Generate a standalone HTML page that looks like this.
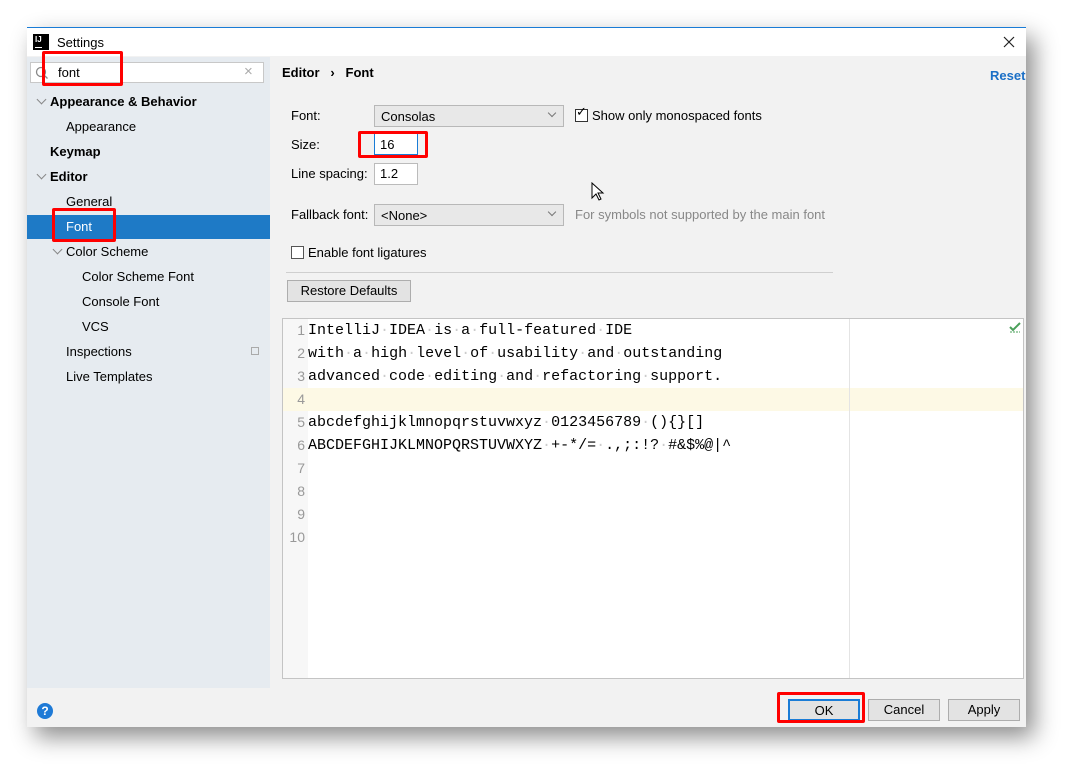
<!DOCTYPE html>
<html><head><meta charset="utf-8"><style>
*{box-sizing:border-box;margin:0;padding:0}
body{width:1080px;height:781px;background:#fff;position:relative;overflow:hidden;font-family:"Liberation Sans",sans-serif;font-size:13px;color:#000}
.a{position:absolute}
.win{left:27px;top:27px;width:999px;height:700px;background:#f2f2f2;border-top:1px solid #1a7cd6;box-shadow:8px 10px 22px rgba(0,0,0,.45)}
.side{left:27px;top:57px;width:243px;height:631px;background:#e6ebf0}
.t{position:absolute;white-space:nowrap}
.b{font-weight:bold}
.chev{position:absolute;width:7px;height:7px;border-right:1.5px solid #888;border-bottom:1.5px solid #888;transform:rotate(45deg)}
.combo{position:absolute;background:#e8e8e8;border:1px solid #b8b8b8;height:22px}
.combo span{position:absolute;left:6px;top:3px}
.combo i{position:absolute;right:8px;top:4px;width:6px;height:6px;border-right:1px solid #777;border-bottom:1px solid #777;transform:rotate(45deg)}
.field{position:absolute;background:#fff;border:1px solid #bbb;height:22px}
.cb{position:absolute;width:13px;height:13px;border:1px solid #333;background:#fff}
.btn{position:absolute;background:#e3e3e3;border:1px solid #adadad;height:22px;text-align:center;line-height:20px}
.red{position:absolute;border:3px solid #f00;border-radius:2px}
.code{font-family:"Liberation Mono",monospace;font-size:15px;line-height:23px}
.code s{text-decoration:none;color:#ccc}
.ln{position:absolute;left:0;width:22px;text-align:right;color:#999;font-family:"Liberation Sans",sans-serif;font-size:14px}
</style></head><body>
<div class="a win"></div>
<div class="a" style="left:27px;top:28px;width:999px;height:28px;background:#fff"></div>
<div class="a" style="left:33px;top:34px;width:16px;height:16px;background:#000;color:#fff;font-size:8px;font-weight:bold;padding:1px 0 0 2px">IJ<div style="position:absolute;left:2px;bottom:2px;width:7px;height:1.5px;background:#fff"></div></div>
<div class="t" style="left:57px;top:35px">Settings</div>
<svg class="a" style="left:1003px;top:36px" width="12" height="12"><path d="M1 1l10 10M11 1L1 11" stroke="#222" stroke-width="1.2"/></svg>
<div class="a side"></div>
<div class="a" style="left:30px;top:62px;width:234px;height:21px;background:#fff;border:1px solid #c8c8c8"></div>
<svg class="a" style="left:35px;top:66px" width="14" height="14"><circle cx="6" cy="6" r="4.5" fill="none" stroke="#888" stroke-width="1.3"/><path d="M9.5 9.5l3 3" stroke="#888" stroke-width="1.3"/></svg>
<div class="t" style="left:58px;top:65px">font</div>
<div class="t" style="left:244px;top:63px;color:#aaa;font-size:15px">×</div>
<div class="chev" style="left:38px;top:96px"></div>
<div class="t b" style="left:50px;top:94px">Appearance &amp; Behavior</div>
<div class="t" style="left:66px;top:119px">Appearance</div>
<div class="t b" style="left:50px;top:144px">Keymap</div>
<div class="chev" style="left:38px;top:171px"></div>
<div class="t b" style="left:50px;top:169px">Editor</div>
<div class="t" style="left:66px;top:194px">General</div>
<div class="a" style="left:27px;top:215px;width:243px;height:24px;background:#1e7ac6"></div>
<div class="t" style="left:66px;top:219px;color:#fff">Font</div>
<div class="chev" style="left:54px;top:246px"></div>
<div class="t" style="left:66px;top:244px">Color Scheme</div>
<div class="t" style="left:82px;top:269px">Color Scheme Font</div>
<div class="t" style="left:82px;top:294px">Console Font</div>
<div class="t" style="left:82px;top:319px">VCS</div>
<div class="t" style="left:66px;top:344px">Inspections</div>
<div class="a" style="left:251px;top:347px;width:8px;height:8px;border:1px solid #aaa"></div>
<div class="t" style="left:66px;top:369px">Live Templates</div>

<div class="t b" style="left:282px;top:65px">Editor &nbsp;&nbsp;›&nbsp;&nbsp; Font</div>
<div class="t b" style="left:990px;top:68px;color:#1a6fc6">Reset</div>
<div class="t" style="left:291px;top:108px">Font:</div>
<div class="combo" style="left:374px;top:105px;width:190px"><span>Consolas</span><i></i></div>
<div class="cb" style="left:575px;top:109px"></div>
<div class="t" style="left:576px;top:104px;font-size:13px">✓</div>
<div class="t" style="left:592px;top:108px">Show only monospaced fonts</div>
<div class="t" style="left:291px;top:137px">Size:</div>
<div class="field" style="left:374px;top:133px;width:44px;border-color:#1a7cd6"></div>
<div class="t" style="left:380px;top:137px">16</div>
<div class="t" style="left:291px;top:166px">Line spacing:</div>
<div class="field" style="left:374px;top:163px;width:44px"></div>
<div class="t" style="left:380px;top:166px">1.2</div>
<div class="t" style="left:291px;top:207px">Fallback font:</div>
<div class="combo" style="left:374px;top:204px;width:190px"><span>&lt;None&gt;</span><i></i></div>
<div class="t" style="left:575px;top:207px;color:#888">For symbols not supported by the main font</div>
<div class="cb" style="left:291px;top:246px;border-color:#555"></div>
<div class="t" style="left:308px;top:245px">Enable font ligatures</div>
<div class="a" style="left:286px;top:272px;width:547px;height:1px;background:#cfcfcf"></div>
<div class="btn" style="left:287px;top:280px;width:124px">Restore Defaults</div>
<svg class="a" style="left:591px;top:182px" width="14" height="20"><path d="M1 1v15l4-4 3 6 2-1-3-6h5z" fill="#fff" stroke="#000" stroke-width="1"/></svg>

<div class="a" style="left:282px;top:318px;width:742px;height:361px;background:#fff;border:1px solid #c4c4c4;overflow:hidden">
<div class="a" style="left:0;top:0;width:25px;height:361px;background:#f7f7f7"></div>
<div class="a" style="left:0;top:69px;width:742px;height:23px;background:#fdf9e5"></div>
<div class="a" style="left:566px;top:0;width:1px;height:361px;background:#e4e4e4"></div>
<div class="ln" style="top:0;line-height:23px">1<br>2<br>3<br>4<br>5<br>6<br>7<br>8<br>9<br>10</div>
<div class="t code" style="left:25px;top:0">IntelliJ<s>·</s>IDEA<s>·</s>is<s>·</s>a<s>·</s>full-featured<s>·</s>IDE<br>with<s>·</s>a<s>·</s>high<s>·</s>level<s>·</s>of<s>·</s>usability<s>·</s>and<s>·</s>outstanding<br>advanced<s>·</s>code<s>·</s>editing<s>·</s>and<s>·</s>refactoring<s>·</s>support.<br>&nbsp;<br>abcdefghijklmnopqrstuvwxyz<s>·</s>0123456789<s>·</s>(){}[]<br>ABCDEFGHIJKLMNOPQRSTUVWXYZ<s>·</s>+-*/=<s>·</s>.,;:!?<s>·</s>#&amp;$%@|^</div>
<svg class="a" style="left:726px;top:2px" width="12" height="12"><path d="M1 6l3 3 7-7" fill="none" stroke="#4aa05a" stroke-width="2"/><path d="M1 11h10" stroke="#4aa05a" stroke-width="1" stroke-dasharray="2 1"/></svg>
</div>

<div class="a" style="left:37px;top:703px;width:16px;height:16px;border-radius:50%;background:#1e7ad6;color:#fff;font-size:12px;font-weight:bold;text-align:center;line-height:16px">?</div>
<div class="btn" style="left:788px;top:699px;width:72px;border:2px solid #1a7cd6">OK</div>
<div class="btn" style="left:868px;top:699px;width:72px">Cancel</div>
<div class="btn" style="left:948px;top:699px;width:72px">Apply</div>

<div class="red" style="left:42px;top:51px;width:81px;height:35px"></div>
<div class="red" style="left:52px;top:208px;width:64px;height:34px"></div>
<div class="red" style="left:358px;top:131px;width:70px;height:27px"></div>
<div class="red" style="left:777px;top:692px;width:88px;height:31px"></div>
</body></html>
